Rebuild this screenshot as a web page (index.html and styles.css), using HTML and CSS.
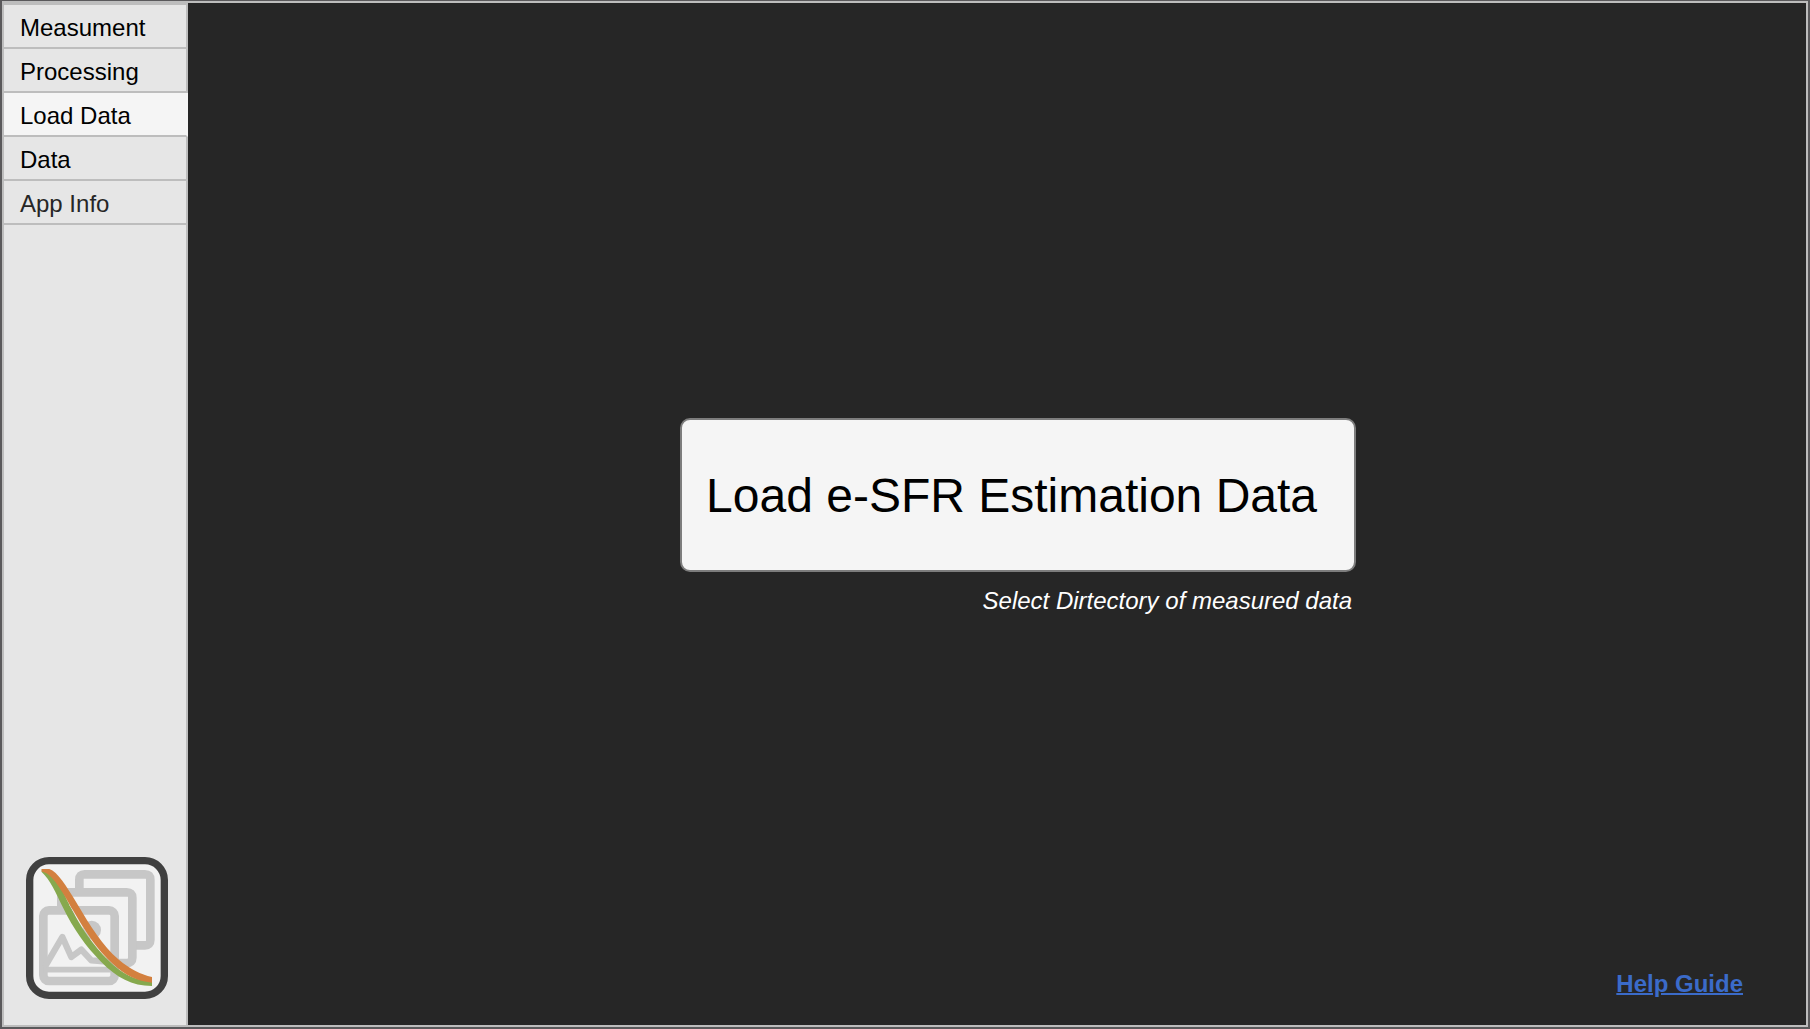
FILE: index.html
```html
<!DOCTYPE html>
<html lang="en">
<head>
<meta charset="utf-8">
<title>e-SFR Estimation</title>
<link rel="stylesheet" href="styles.css">
</head>
<body>
<div class="app">
  <aside class="sidebar">
    <nav class="tabs">
      <button type="button" class="tab">Measument</button>
      <button type="button" class="tab">Processing</button>
      <button type="button" class="tab tab-selected" aria-current="page">Load Data</button>
      <button type="button" class="tab">Data</button>
      <button type="button" class="tab tab-muted">App Info</button>
    </nav>
    <svg class="logo" viewBox="33 36 426 426" role="img" aria-label="App logo">
      <rect x="44" y="47" width="404" height="404" rx="58" fill="#f2f2f2" stroke="#404040" stroke-width="22"/>
      <g fill="none" stroke="#c7c7c7" stroke-width="26" stroke-linejoin="round">
        <path d="M193 135V104Q193 88 209 88H390Q406 88 406 104V285Q406 301 390 301H358"/>
        <path d="M139 190V158Q139 142 155 142H335Q352 142 352 158V338Q352 354 335 354H305"/>
        <rect x="85" y="196" width="214" height="212" rx="17"/>
        <path d="M85 374H299" stroke-width="17"/>
        <path d="M90 365L142 276L169 336L199 314L229 346L292 351" stroke-width="19"/>
      </g>
      <circle cx="230" cy="255" r="28" fill="#c7c7c7"/>
      <path d="M184 205C216 260 260 315 315 354" fill="none" stroke="#f2f2f2" stroke-width="9"/>
      <path d="M80 73H93C119 81 136 125 162 177C199 252 236 302 279 345C322 388 360 406 411 409V423C350 422 306 398 258 350C213 305 176 254 142 184C122 143 106 105 80 81Z" fill="#86a94e"/>
      <path d="M166 178C200 238 239 299 288 342C323 373 362 397 411 406" fill="none" stroke="#f2f2f2" stroke-width="7"/>
      <path d="M80 72H103C128 81 153 121 185 174C225 242 263 302 310 343C347 374 377 389 411 396V413C365 408 331 391 294 357C247 316 211 260 174 196C147 148 117 94 91 83Q86 80 80 80Z" fill="#d3803f"/>
    </svg>
  </aside>
  <main class="content">
    <section class="loader">
      <button type="button" class="load-button" aria-describedby="load-hint">Load e-SFR Estimation Data</button>
      <p class="hint" id="load-hint">Select Dirtectory of measured data</p>
    </section>
    <a class="help" href="#help">Help Guide</a>
  </main>
</div>
</body>
</html>
```
FILE: styles.css
```css
* {
  box-sizing: border-box;
}

body {
  margin: 0;
  padding: 1px 2px 2px;
  min-height: 100vh;
  display: flex;
  background: #5a595b;
  font-family: "Liberation Sans", Arial, sans-serif;
  font-size: 24px;
  line-height: 28px;
}

.app {
  flex: 1;
  display: flex;
  border: 2px solid #bdbdbd;
  background: #262626;
}

.sidebar {
  flex: none;
  width: 184px;
  display: flex;
  flex-direction: column;
  justify-content: space-between;
  background: linear-gradient(#bdbdbd, #bdbdbd) right / 2px 100% no-repeat #e6e6e6;
}

.tabs {
  display: flex;
  flex-direction: column;
  border-top: 2px solid #bdbdbd;
}

.tab {
  height: 44px;
  padding: 4px 16px 0;
  border: 0;
  border-right: 2px solid #bdbdbd;
  border-bottom: 2px solid #bdbdbd;
  background: #e6e6e6;
  color: #000;
  font: inherit;
  text-align: left;
}

.tab-selected {
  border-right-color: #f5f5f5;
  background: #f5f5f5;
}

.tab-muted {
  color: #262626;
}

.logo {
  width: 142px;
  height: 142px;
  margin: 0 20px 26px 22px;
}

.content {
  flex: 1;
  display: grid;
  grid-template-columns: 35fr auto 32fr;
  grid-template-rows: 1fr auto 1fr;
}

.loader {
  grid-area: 2 / 2;
  padding-top: 4px;
}

.load-button {
  display: block;
  width: 676px;
  height: 154px;
  padding: 2px 24px 0;
  border: 2px solid #7d7d7d;
  border-radius: 10px;
  background: #f5f5f5;
  color: #000;
  font: inherit;
  font-size: 48px;
  text-align: left;
}

.hint {
  margin: 15px 4px 0 0;
  color: #fff;
  font-style: italic;
  text-align: right;
}

.help {
  grid-area: 3 / 1 / 4 / 4;
  place-self: end;
  margin: 0 63px 27px 0;
  color: #3b6bc9;
  font-weight: 700;
  text-decoration-thickness: 2px;
}
```
